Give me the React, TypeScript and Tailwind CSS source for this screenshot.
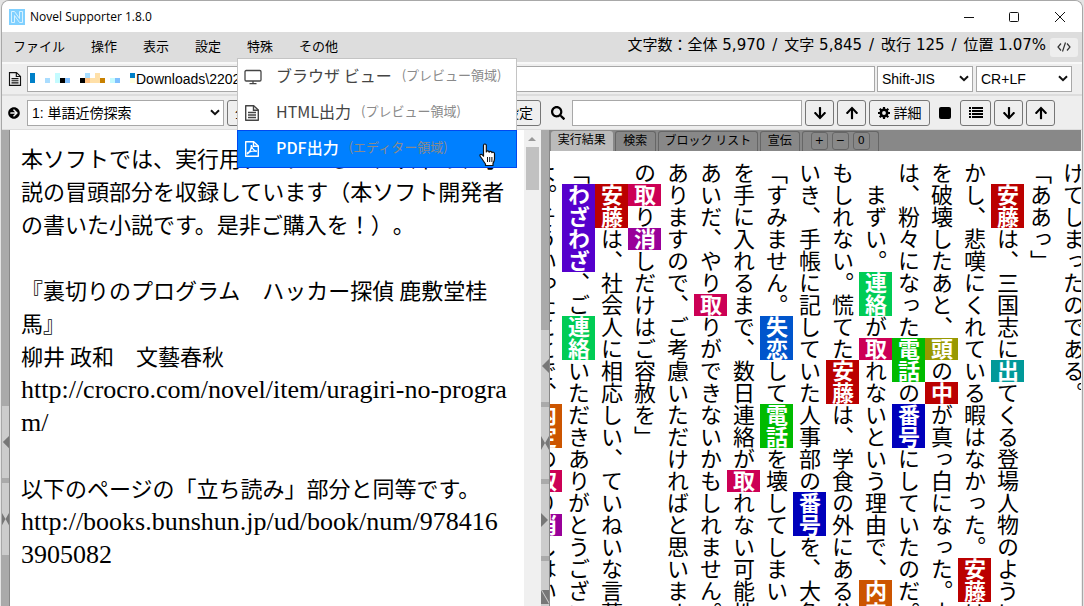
import React from 'react';
import { FaArrowCircleRight, FaArrowDown, FaArrowUp, FaSearch } from 'react-icons/fa';

const UI_FONT = "font-['Noto_Sans_CJK_JP',sans-serif]";

const menus = ['ファイル', '操作', '表示', '設定', '特殊', 'その他'];

const stats = ['文字数：全体 5,970', '文字 5,845', '改行 125', '位置 1.07%'];

const popupItems = [
  { icon: 'monitor', label: 'ブラウザ ビュー', area: '(プレビュー領域)', active: false },
  { icon: 'doc', label: 'HTML出力', area: '(プレビュー領域)', active: false },
  { icon: 'pdf', label: 'PDF出力', area: '(エディター領域)', active: true },
];

// [x, y, width, height, color]
const mosaic: [number, number, number, number, string][] = [
  [0, 0, 5, 10, '#0080c8'],
  [15, 5, 5, 5, '#aaddff'],
  [25, 0, 5, 10, '#c4fbff'],
  [30, 5, 5, 5, '#000000'],
  [35, 5, 5, 5, '#80c0ff'],
  [50, 5, 5, 5, '#000000'],
  [55, 0, 5, 5, '#a8ddff'],
  [55, 5, 5, 5, '#ffc080'],
  [60, 5, 5, 5, '#ffe0a8'],
  [65, 0, 5, 10, '#ffe0a8'],
  [70, 5, 5, 5, '#c88000'],
  [80, 5, 5, 5, '#c4fbff'],
  [85, 5, 5, 5, '#80c0ff'],
  [100, 0, 5, 5, '#0080c8'],
  [100, 5, 5, 5, '#ffffdd'],
];

const wordColors: Record<string, string> = {
  安藤: 'bg-[#bb0000]',
  中: 'bg-[#bb0000]',
  出: 'bg-[#009999]',
  頭: 'bg-[#999900]',
  電話: 'bg-[#00bb00]',
  番号: 'bg-[#0000bb]',
  連絡: 'bg-[#00cc55]',
  取: 'bg-[#cc0055]',
  内定: 'bg-[#cc5500]',
  失恋: 'bg-[#0055cc]',
  消: 'bg-[#990099]',
  わざわざ: 'bg-[#5500cc]',
};

// words in [] are marked
const novelLines = [
  'けてしまったのである。',
  '「ああっ」',
  '　[安藤]は、三国志に[出]てくる登場人物のように',
  'かし、悲嘆にくれている暇はなかった。[安藤]は',
  'を破壊したあと、[頭]の[中]が真っ白になった。大',
  'は、粉々になった[電話]の[番号]にしていたのだ。',
  '　まずい。[連絡]が[取]れないという理由で、[内定]',
  'もしれない。慌てた[安藤]は、学食の外にある公',
  'いき、手帳に記していた人事部の[番号]を、大急',
  '「すみません。[失恋]して[電話]を壊してしまい',
  'を手に入れるまで、数日連絡が[取]れない可能性',
  'あいだ、やり[取]りができないかもしれません。',
  'ありますので、ご考慮いただければと思います',
  'の[取]り[消]しだけはご容赦を」',
  '　[安藤]は、社会人に相応しい、ていねいな言葉',
  '「[わざわざ]、ご[連絡]いただきありがとうござい',
  'よ。そういったことで、[内定]の[取]り[消]しはい',
];

const editorLines = [
  '本ソフトでは、実行用データとして、以下の、小',
  '説の冒頭部分を収録しています（本ソフト開発者',
  'の書いた小説です。是非ご購入を！）。',
  '',
  '『裏切りのプログラム　ハッカー探偵 鹿敷堂桂',
  '馬』',
  '柳井 政和　文藝春秋',
  'http://crocro.com/novel/item/uragiri-no-progra',
  'm/',
  '',
  '以下のページの「立ち読み」部分と同等です。',
  'http://books.bunshun.jp/ud/book/num/978416',
  '3905082',
];

const DocIcon: React.FC<{ pdf?: boolean }> = ({ pdf }) => (
  <svg viewBox="0 0 16 18" className="w-4 h-[18px]" fill="none" stroke="currentColor" strokeWidth="1.4">
    <path d="M1.7 1.7h8l4.6 4.3v10.3H1.7z" strokeLinejoin="round" />
    <path d="M9.5 1.7v4.5h4.8" />
    {pdf ? (
      <path d="M7.3 5c.4 3-1.4 7.200-3.700 8.800-1.300-.6 1.500-2.800 8.600-2.900 1.200 1.500-4.200-.6-4.900-5.900z" />
    ) : (
      <path d="M4 8.500h8M4 11h8M4 13.500h8" />
    )}
  </svg>
);

const MonitorIcon = () => (
  <svg viewBox="0 0 18 18" className="w-[18px] h-[18px]" fill="none" stroke="currentColor" strokeWidth="1.3">
    <rect x="1" y="2.500" width="16" height="10.500" rx="1.200" />
    <path d="M9 13v2.500M5.500 15.700h7" />
  </svg>
);

const GearIcon = () => (
  <svg viewBox="0 0 12 12" className="w-3 h-3" fill="none" stroke="currentColor">
    <circle cx="6" cy="6" r="3.200" strokeWidth="2.600" />
    <path
      d="M6 0v2.500M6 9.500V12M0 6h2.500M9.500 6H12M1.700 1.700l1.800 1.800M8.500 8.500l1.800 1.800M10.300 1.700L8.500 3.500M3.500 8.500l-1.800 1.800"
      strokeWidth="2.200"
    />
  </svg>
);

const ListIcon = () => (
  <svg viewBox="0 0 14 12" className="w-3.5 h-3" fill="currentColor">
    <path d="M0 0h2v2H0zM3 0h11v2H3zM0 3h2v2H0zM3 3h11v2H3zM0 6h2v2H0zM3 6h11v2H3zM0 9h2v2H0zM3 9h11v2H3z" />
  </svg>
);

const CodeIcon = () => (
  <svg viewBox="0 0 14 10" className="w-3.5 h-2.5" fill="none" stroke="#333" strokeWidth="1.200">
    <path d="M4 1.500L1 5l3 3.500M10 1.500L13 5l-3 3.500M8.500.5l-3 9" />
  </svg>
);

const HandCursor = () => (
  <svg viewBox="0 0 17 24" className="absolute right-5 top-3 w-[17px] h-6">
    <path
      d="M4.500 2.500c0-2 2.800-2 2.800 0v6.500c.2-1.500 2.600-1.400 2.800.2.500-1.200 2.600-1 2.800.5.700-1 2.600-.6 2.600 1v5.300c0 2-1 3-1.500 4.500v2H6.500v-1.500C5 19 3.500 16.500 1.300 13.500c-1.200-1.700.8-2.800 2-1.600l1.200 1.300z"
      fill="#fff"
      stroke="#111"
      strokeWidth="1.200"
      strokeLinejoin="round"
    />
    <path d="M8.500 14v5M10.700 14v5M12.900 14v5" stroke="#111" />
  </svg>
);

const SpecialMenu = () => (
  <div
    role="menu"
    className="absolute z-10 -left-2.5 top-[26px] w-[280px] bg-white border border-[#c4c4c4] border-b-0"
  >
    {popupItems.map((item) => (
      <button
        key={item.label}
        role="menuitem"
        className={`relative flex items-center w-full h-9 pl-1.5 text-base whitespace-nowrap ${
          item.active ? 'bg-[#0080ff] text-white outline outline-[#0048f0]' : 'text-[#444]'
        }`}
      >
        <span className="w-8 shrink-0">
          {item.icon === 'monitor' ? <MonitorIcon /> : <DocIcon pdf={item.icon === 'pdf'} />}
        </span>
        <span className="flex items-center pb-1">
          <span className={item.active ? 'font-medium' : ''}>{item.label}</span>
          <span className="ml-2.5 text-[13px] text-[#8a8a8a]">{item.area}</span>
        </span>
        {item.active && <HandCursor />}
      </button>
    ))}
  </div>
);

interface SelectProps {
  label: string;
  value: string;
  className: string;
}

const Select: React.FC<SelectProps> = ({ label, value, className }) => (
  <div className={`relative shrink-0 ${className}`}>
    <select aria-label={label} className="appearance-none w-full h-[26px] pl-1 bg-white border border-[#a8a8a8] text-black">
      <option>{value}</option>
    </select>
    <svg viewBox="0 0 10 7" className="absolute right-1 top-[9px] w-2.5 h-[7px] pointer-events-none">
      <path d="M1 1.200l4 4 4-4" fill="none" stroke="#111" strokeWidth="2" />
    </svg>
  </div>
);

const ToolButton: React.FC<{ label: string; className?: string; children: React.ReactNode }> = ({
  label,
  className = 'w-[29px]',
  children,
}) => (
  <button
    aria-label={label}
    className={`flex items-center justify-center gap-1 h-[26px] shrink-0 bg-[#efefef] border border-[#767676] rounded-[3px] ${className}`}
  >
    {children}
  </button>
);

const triangles = {
  left: 'M8 0v14L1 7z',
  both: 'M0 0l4 7-4 7zM8 0v14L4 7z',
  right: 'M0 0v14l7-7z',
  diag: 'M0 0l8 14H0zM1 0h7v12z',
};

const SplitHandle: React.FC<{ kind: keyof typeof triangles }> = ({ kind }) => (
  <button aria-label={kind} className="flex items-center w-full h-[72px] shrink-0 bg-[#ccc]">
    <svg viewBox="0 0 8 14" className="w-2 h-3.5">
      <path d={triangles[kind]} fill="#777" />
    </svg>
  </button>
);

const NovelLine: React.FC<{ text: string }> = ({ text }) => (
  <p>
    {text.split(/[[\]]/).map((part, i) =>
      i % 2 ? (
        <mark key={i} className={`inline-block leading-[33px] font-bold text-white ${wordColors[part]}`}>
          {part}
        </mark>
      ) : (
        part
      ),
    )}
  </p>
);

const TitleBar = () => (
  <header className="flex items-center h-[31px] shrink-0 pl-[7px] pr-4 bg-white">
    <svg viewBox="0 0 16 16" className="w-4 h-4">
      <rect width="16" height="16" fill="#80d0ff" />
      <path
        d="M2.500 2.500h3l5 7v-7h3v11h-3l-5-7v7h-3z"
        fill="none"
        stroke="#d8f2ff"
      />
    </svg>
    <h1 className="ml-[5px] text-xs font-['Open_Sans',sans-serif]">Novel Supporter 1.8.0</h1>
    <svg viewBox="0 0 102 12" className="ml-auto w-[102px] h-3" fill="none" stroke="#111">
      <path d="M0 6.500h10M91 1l10 10M101 1L91 11" />
      <rect x="45.500" y="1.500" width="9" height="9" rx="1" />
    </svg>
  </header>
);

export default function App() {
  return (
    <div className={`h-screen px-px bg-[#e4e4e4] text-black ${UI_FONT}`}>
      <div className="flex flex-col h-full overflow-hidden bg-[#eee] border border-b-0 border-[#a8a8a8] rounded-t-lg">
        <TitleBar />

        {/* Menu bar */}
        <nav className="flex items-center h-[30px] shrink-0 pl-[11px] pr-1 bg-[#ddd] text-[13px]">
          <ul className="flex gap-[26px]">
            {menus.map((menu) => (
              <li key={menu} className="relative">
                <button className="h-[30px] pb-0.5 whitespace-nowrap">{menu}</button>
                {menu === '特殊' && <SpecialMenu />}
              </li>
            ))}
          </ul>
          <div className="flex gap-[7px] ml-auto pb-1 text-[15px] whitespace-nowrap font-['DejaVu_Sans','Noto_Sans_CJK_JP',sans-serif]">
            {stats.map((stat, i) => (
              <React.Fragment key={stat}>
                {i > 0 && <span>/</span>}
                <span>{stat}</span>
              </React.Fragment>
            ))}
          </div>
          <button aria-label="コード" className="ml-1 flex items-center justify-center w-7 h-[19px] bg-[#eee] rounded-[3px]">
            <CodeIcon />
          </button>
        </nav>

        {/* File row */}
        <div className="flex items-center h-[34px] shrink-0 pl-1.5 pr-2.5 border-y-2 border-t-[#f8f8f8] border-b-[#ddd] text-sm font-['Liberation_Sans','Noto_Sans_CJK_JP',sans-serif]">
          <span className="w-[19px] shrink-0">
            <svg viewBox="0 0 16 18" className="w-3.5 h-4" fill="none" stroke="#111" strokeWidth="1.300">
              <path d="M1.700 1.700h8l4.600 4.300v10.300H1.700zM9.500 1.700v4.500h4.800M4 8.500h8M4 11h8M4 13.500h8" />
            </svg>
          </span>
          <div className="relative flex-1">
            <input
              aria-label="ファイルパス"
              defaultValue={'Downloads\\220211'}
              className="block w-full h-[26px] pl-[108px] bg-white border border-[#a8a8a8]"
            />
            <svg viewBox="0 0 105 10" className="absolute left-[3px] top-[7px] w-[105px] h-2.5">
              {mosaic.map(([x, y, w, h, color]) => (
                <rect key={`${x}-${y}`} x={x} y={y} width={w} height={h} fill={color} />
              ))}
            </svg>
          </div>
          <Select label="文字コード" value="Shift-JIS" className="ml-0.5 w-24" />
          <Select label="改行コード" value="CR+LF" className="ml-[3px] w-24" />
        </div>

        {/* Tool row */}
        <div className="flex items-center h-[34px] shrink-0 pl-1.5 border-b border-[#ddd] text-sm font-['Liberation_Sans','Noto_Sans_CJK_JP',sans-serif]">
          <FaArrowCircleRight className="w-3 h-3 mr-[7px] shrink-0" />
          <Select label="処理" value="1: 単語近傍探索" className="w-[197px]" />
          <ToolButton label="全設定" className="ml-[3px] w-[314px]">
            <span className="w-full flex justify-between px-[7px]">
              <span>全て</span>
              <span>設定</span>
            </span>
          </ToolButton>
          <FaSearch className="w-3.5 h-3.5 ml-2.5 mr-[7px] shrink-0" />
          <input aria-label="検索語" className="flex-1 min-w-0 h-[26px] mr-[3px] bg-white border border-[#a8a8a8]" />
          <div className="flex items-center gap-[3px] pr-[27px]">
            <ToolButton label="次を検索">
              <FaArrowDown />
            </ToolButton>
            <ToolButton label="前を検索">
              <FaArrowUp />
            </ToolButton>
            <ToolButton label="詳細" className="w-[61px]">
              <GearIcon />
              詳細
            </ToolButton>
            <span className="w-3 h-3 mx-1.5 bg-black rounded-[2px]" />
            <ToolButton label="一覧" className="w-[31px]">
              <ListIcon />
            </ToolButton>
            <ToolButton label="次へ">
              <FaArrowDown />
            </ToolButton>
            <ToolButton label="前へ">
              <FaArrowUp />
            </ToolButton>
          </div>
        </div>

        <div className="flex flex-1 min-h-0 [text-spacing-trim:space-all]">
          {/* Left gutter */}
          <div className="flex flex-col gap-[5px] w-2 shrink-0 pt-[276px] bg-[#aaa] border-r border-[#888]">
            <SplitHandle kind="left" />
            <SplitHandle kind="both" />
          </div>

          {/* Editor */}
          <main
            contentEditable
            suppressContentEditableWarning
            aria-label="エディター"
            className="flex-1 min-w-0 pl-[11px] pt-[11px] overflow-hidden bg-white text-[22px] leading-[33px] whitespace-nowrap"
          >
            {editorLines.map((line, i) => (
              <p key={i} className="h-[33px]">
                {/^[\x21-\x7e]+$/.test(line) ? (
                  <span className="text-[26px] leading-none font-['Liberation_Serif',serif]">{line}</span>
                ) : (
                  line
                )}
              </p>
            ))}
          </main>
          <div className="flex flex-col items-center gap-1.5 w-[17px] shrink-0 pt-[7px] bg-[#f0f0f0]">
            <svg viewBox="0 0 8 4" className="w-2 h-1">
              <path d="M4 0l4 4H0z" fill="#999" />
            </svg>
            <div className="w-[13px] h-[43px] bg-[#c1c1c1]" />
          </div>

          {/* Splitter */}
          <div className="flex flex-col gap-[5px] w-[9px] shrink-0 pt-[200px] bg-[#aaa] border-r border-[#888]">
            <SplitHandle kind="left" />
            <SplitHandle kind="both" />
            <SplitHandle kind="right" />
            <SplitHandle kind="diag" />
          </div>

          {/* Preview */}
          <section className="flex flex-col w-[calc(49%+2px)] shrink-0 mr-px bg-white overflow-hidden">
            <div className="flex items-end gap-0.5 h-[21px] shrink-0 pl-px bg-[#888] text-xs">
              <button className="w-[62px] h-5 pb-1 bg-[#bbb] rounded-t-[3px]">実行結果</button>
              <button className="w-[41px] h-5 pb-1 border border-b-0 border-[#666] rounded-t-[3px]">検索</button>
              <button className="w-[100px] h-5 pb-1 border border-b-0 border-[#666] rounded-t-[3px]">ブロック リスト</button>
              <button className="w-10 h-5 pb-1 border border-b-0 border-[#666] rounded-t-[3px]">宣伝</button>
              <div className="flex gap-1 h-5 px-2 border border-b-0 border-[#666] rounded-t-[3px] font-['DejaVu_Sans',sans-serif] text-[11px]">
                {['+', '−', '0'].map((sign) => (
                  <button key={sign} className="w-[17px] h-[18px] border border-[#666] rounded-[3px] leading-4">
                    {sign}
                  </button>
                ))}
              </div>
            </div>
            <div className="flex-1 min-h-0 pt-[11px] -mr-[9px] overflow-hidden">
              <div className="float-right [writing-mode:vertical-rl] text-[22px] leading-[33px] whitespace-nowrap">
                {novelLines.map((line) => (
                  <NovelLine key={line} text={line} />
                ))}
              </div>
            </div>
          </section>
        </div>
      </div>
    </div>
  );
}
